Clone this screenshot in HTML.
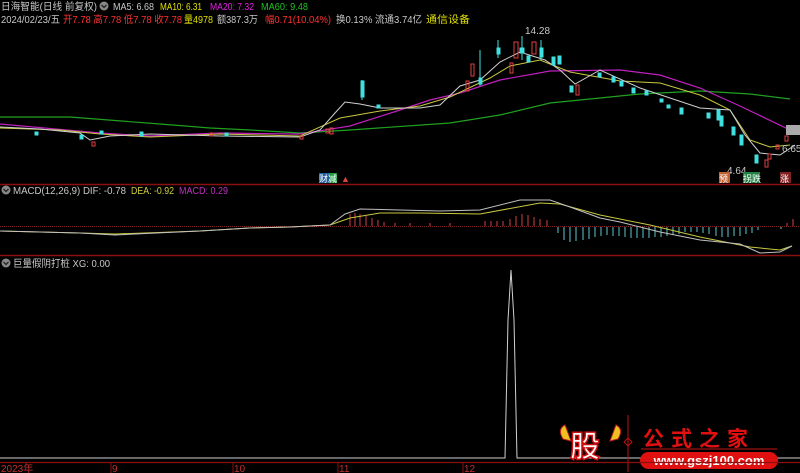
<!DOCTYPE html>
<html><head><meta charset="utf-8"><style>
body{margin:0;background:#000;width:800px;height:473px;overflow:hidden;font-family:"Liberation Sans","Noto Sans CJK SC",sans-serif;}
svg{position:absolute;left:0;top:0}
</style></head><body>
<svg width="800" height="473" viewBox="0 0 800 473" xmlns="http://www.w3.org/2000/svg" font-family="Liberation Sans, Noto Sans CJK SC, sans-serif">
<g font-size="10" lengthAdjust="spacingAndGlyphs">
<text x="1" y="10" fill="#c8c8c8" textLength="96" lengthAdjust="spacingAndGlyphs">日海智能(日线 前复权)</text>
<circle cx="104" cy="6" r="4.5" fill="#888"/><path d="M101.5 5 L104 7.5 L106.5 5" stroke="#222" stroke-width="1.3" fill="none"/>
<text x="113" y="10" fill="#c8c8c8" textLength="41" lengthAdjust="spacingAndGlyphs">MA5: 6.68</text>
<text x="160" y="10" fill="#e0e000" textLength="42" lengthAdjust="spacingAndGlyphs">MA10: 6.31</text>
<text x="210" y="10" fill="#e020e0" textLength="44" lengthAdjust="spacingAndGlyphs">MA20: 7.32</text>
<text x="261" y="10" fill="#20c020" textLength="47" lengthAdjust="spacingAndGlyphs">MA60: 9.48</text>
<text x="1" y="23" fill="#c8c8c8" textLength="59" lengthAdjust="spacingAndGlyphs">2024/02/23/五</text>
<text x="63" y="23" fill="#ff3030" textLength="119" lengthAdjust="spacingAndGlyphs">开7.78 高7.78 低7.78 收7.78</text>
<text x="184" y="23" fill="#e0e000" textLength="29" lengthAdjust="spacingAndGlyphs">量4978</text>
<text x="217" y="23" fill="#c8c8c8" textLength="41" lengthAdjust="spacingAndGlyphs">额387.3万</text>
<text x="265" y="23" fill="#ff3030" textLength="66" lengthAdjust="spacingAndGlyphs">幅0.71(10.04%)</text>
<text x="336" y="23" fill="#c8c8c8" textLength="86" lengthAdjust="spacingAndGlyphs">换0.13% 流通3.74亿</text>
<text x="426" y="23" fill="#e0e000" textLength="44" lengthAdjust="spacingAndGlyphs">通信设备</text>
</g>

<polyline fill="none" stroke="#20a020" stroke-width="1.2" points="0,117 70,117 160,124 210,128 250,130 300,133 350,130 450,123 500,115 550,103 640,94 700,91 750,94 790,99"/>
<polyline fill="none" stroke="#c020c0" stroke-width="1.2" points="0,124 100,133 150,136 220,133 290,134 300,134 350,126 400,110 430,100 460,93 500,80 550,71 620,70 660,75 700,88 740,106 790,130"/>
<polyline fill="none" stroke="#c8c840" stroke-width="1" points="0,128 60,130 100,134 150,137 220,134 300,136 340,118 380,111 420,106 450,97 490,78 510,66 540,60 570,72 620,81 660,83 700,95 730,110 750,140 770,147 790,145"/>
<polyline fill="none" stroke="#d0d0d0" stroke-width="1" points="0,127 40,129 80,133 90,140 110,136 150,134 220,136 300,137 320,130 335,113 345,102 360,104 380,108 420,108 440,105 460,86 480,80 500,62 520,52 545,60 560,70 575,84 600,70 640,88 700,108 730,110 745,135 760,153 780,155 795,145"/>

<g stroke="#40e0e0" fill="#40e0e0">
<rect x="361" y="81" width="3" height="16"/><line x1="362" y1="80" x2="362" y2="100"/>
<rect x="479" y="78" width="3" height="6"/><line x1="480" y1="50" x2="480" y2="86"/>
<rect x="497" y="48" width="3" height="6"/><line x1="498" y1="40" x2="498" y2="58"/>
<rect x="520" y="48" width="4" height="5"/><line x1="522" y1="36" x2="522" y2="60"/>
<rect x="527" y="56" width="3" height="6"/>
<rect x="540" y="48" width="3" height="9"/><line x1="541" y1="40" x2="541" y2="60"/>
<rect x="552" y="57" width="3" height="8"/>
<rect x="558" y="56" width="3" height="8"/>
<rect x="570" y="86" width="3" height="6"/>
<rect x="598" y="73" width="3" height="4"/>
<rect x="612" y="77" width="3" height="5"/>
<rect x="620" y="81" width="3" height="5"/>
<rect x="632" y="88" width="3" height="5"/>
<rect x="645" y="91" width="3" height="4"/>
<rect x="660" y="99" width="3" height="3"/>
<rect x="667" y="105" width="3" height="3"/>
<rect x="680" y="108" width="3" height="6"/>
<rect x="707" y="113" width="3" height="5"/>
<rect x="717" y="110" width="3" height="10"/>
<rect x="720" y="116" width="3" height="10"/>
<rect x="732" y="127" width="3" height="8"/>
<rect x="740" y="135" width="3" height="10"/>
<rect x="755" y="155" width="3" height="8"/>
<rect x="140" y="132" width="3" height="4"/><rect x="80" y="135" width="3" height="4"/><rect x="100" y="131" width="3" height="3"/>
<rect x="35" y="132" width="3" height="3"/><rect x="225" y="133" width="3" height="3"/><rect x="377" y="105" width="3" height="3"/>
</g>
<g stroke="#e04040" fill="none">
<rect x="466" y="81" width="3" height="10"/>
<rect x="471" y="64" width="3" height="12"/>
<rect x="514" y="42" width="4" height="16"/>
<rect x="532" y="42" width="4" height="12"/>
<rect x="510" y="63" width="3" height="10"/>
<rect x="576" y="85" width="3" height="10"/>
<rect x="765" y="160" width="3" height="7"/>
<rect x="768" y="154" width="3" height="5"/>
<rect x="776" y="145" width="3" height="4"/>
<rect x="785" y="136" width="3" height="5"/>
<rect x="330" y="128" width="3" height="6"/><rect x="326" y="129" width="3" height="4"/>
<rect x="92" y="142" width="3" height="4"/><rect x="210" y="133" width="3" height="3"/><rect x="300" y="136" width="3" height="3"/>
</g>
<rect x="786" y="125" width="14" height="10" fill="#aaa"/>
<text x="525" y="34" font-size="10" fill="#c8c8c8">14.28</text>
<text x="727" y="174" font-size="10" fill="#c8c8c8">4.64</text>
<text x="782" y="152" font-size="10" fill="#c8c8c8">6.65</text>
<rect x="319" y="173" width="10" height="10" fill="#2060a0"/><rect x="329" y="173" width="8" height="10" fill="#20a040"/>
<text x="319" y="182" font-size="9" fill="#fff">财减</text>
<text x="341" y="182" font-size="9" fill="#e04040">▲</text>
<rect x="719" y="172" width="11" height="11" fill="#c06030"/><text x="719" y="182" font-size="9" fill="#fff">预</text>
<rect x="743" y="172" width="17" height="11" fill="#208040"/><text x="743" y="182" font-size="9" fill="#fff">拐跌</text>
<rect x="780" y="172" width="11" height="11" fill="#802020"/><text x="780" y="182" font-size="9" fill="#fff">涨</text>

<line x1="0" y1="184.5" x2="800" y2="184.5" stroke="#8a1010" stroke-width="1.5"/>
<circle cx="6" cy="190" r="4.5" fill="#888"/><path d="M3.5 189 L6 191.5 L8.5 189" stroke="#222" stroke-width="1.3" fill="none"/>
<text x="13" y="194" font-size="10" fill="#c8c8c8" textLength="113" lengthAdjust="spacingAndGlyphs">MACD(12,26,9) DIF: -0.78</text>
<text x="131" y="194" font-size="10" fill="#d0d040" textLength="43" lengthAdjust="spacingAndGlyphs">DEA: -0.92</text>
<text x="179" y="194" font-size="10" fill="#c030c0" textLength="49" lengthAdjust="spacingAndGlyphs">MACD: 0.29</text>
<line x1="0" y1="226.5" x2="800" y2="226.5" stroke="#802020" stroke-dasharray="1,1"/>
<g stroke="#d04040">
<line x1="350" y1="226" x2="350" y2="214"/><line x1="355" y1="226" x2="355" y2="213"/><line x1="360" y1="226" x2="360" y2="214"/><line x1="366" y1="226" x2="366" y2="216"/><line x1="372" y1="226" x2="372" y2="218"/><line x1="378" y1="226" x2="378" y2="220"/><line x1="384" y1="226" x2="384" y2="222"/><line x1="395" y1="226" x2="395" y2="223"/><line x1="410" y1="226" x2="410" y2="223"/><line x1="430" y1="226" x2="430" y2="223"/><line x1="450" y1="226" x2="450" y2="223"/>
<line x1="485" y1="226" x2="485" y2="221"/><line x1="491" y1="226" x2="491" y2="221"/><line x1="497" y1="226" x2="497" y2="221"/><line x1="503" y1="226" x2="503" y2="221"/><line x1="510" y1="226" x2="510" y2="219"/><line x1="516" y1="226" x2="516" y2="216"/><line x1="522" y1="226" x2="522" y2="214"/><line x1="528" y1="226" x2="528" y2="215"/><line x1="534" y1="226" x2="534" y2="217"/><line x1="540" y1="226" x2="540" y2="219"/><line x1="547" y1="226" x2="547" y2="220"/><line x1="793" y1="226" x2="793" y2="219"/><line x1="787" y1="226" x2="787" y2="223"/>
</g>
<g stroke="#60c8d0">
<line x1="558" y1="227" x2="558" y2="233"/><line x1="564" y1="227" x2="564" y2="240"/><line x1="570" y1="227" x2="570" y2="242"/><line x1="576" y1="227" x2="576" y2="241"/><line x1="583" y1="227" x2="583" y2="240"/><line x1="589" y1="227" x2="589" y2="239"/><line x1="595" y1="227" x2="595" y2="237"/><line x1="601" y1="227" x2="601" y2="236"/><line x1="607" y1="227" x2="607" y2="235"/><line x1="613" y1="227" x2="613" y2="236"/><line x1="619" y1="227" x2="619" y2="236"/><line x1="625" y1="227" x2="625" y2="237"/><line x1="631" y1="227" x2="631" y2="238"/><line x1="637" y1="227" x2="637" y2="238"/><line x1="643" y1="227" x2="643" y2="238"/><line x1="649" y1="227" x2="649" y2="238"/><line x1="655" y1="227" x2="655" y2="237"/><line x1="661" y1="227" x2="661" y2="237"/><line x1="667" y1="227" x2="667" y2="236"/><line x1="673" y1="227" x2="673" y2="235"/><line x1="679" y1="227" x2="679" y2="234"/><line x1="685" y1="227" x2="685" y2="232"/><line x1="691" y1="227" x2="691" y2="232"/><line x1="697" y1="227" x2="697" y2="232"/><line x1="703" y1="227" x2="703" y2="233"/><line x1="709" y1="227" x2="709" y2="234"/><line x1="716" y1="227" x2="716" y2="236"/><line x1="722" y1="227" x2="722" y2="237"/><line x1="728" y1="227" x2="728" y2="237"/><line x1="734" y1="227" x2="734" y2="236"/><line x1="740" y1="227" x2="740" y2="236"/><line x1="746" y1="227" x2="746" y2="234"/><line x1="752" y1="227" x2="752" y2="233"/><line x1="758" y1="227" x2="758" y2="230"/><line x1="781" y1="227" x2="781" y2="229"/>
</g>
<polyline fill="none" stroke="#c8c840" stroke-width="1" points="0,231 80,233 115,234 200,231 250,228 290,227 330,225 350,218 380,213 420,213 480,214 540,203 560,204 600,215 650,225 700,237 750,247 780,250 792,246"/>
<polyline fill="none" stroke="#c0c0c0" stroke-width="1" points="0,231 80,233 115,235 200,231 250,228 290,227 330,225 345,214 360,209 400,210 440,211 480,210 520,200 550,200 570,207 600,218 620,222 660,232 700,240 740,244 760,253 780,252 792,246"/>

<line x1="0" y1="255.5" x2="800" y2="255.5" stroke="#8a1010" stroke-width="1.5"/>
<circle cx="6" cy="263" r="4.5" fill="#888"/><path d="M3.5 262 L6 264.5 L8.5 262" stroke="#222" stroke-width="1.3" fill="none"/>
<text x="13" y="267" font-size="10" fill="#c8c8c8" textLength="97" lengthAdjust="spacingAndGlyphs">巨量假阴打桩 XG: 0.00</text>
<polyline fill="none" stroke="#d0d0d0" stroke-width="1" points="0,458 505,458 508,320 511,270 514,320 517,458 800,458"/>

<path d="M565 425 q-8 4 -2 14 l8 2z" fill="#f0c020" stroke="#c02020"/>
<path d="M616 425 q8 4 2 14 l-8 2z" fill="#f0c020" stroke="#c02020"/>
<text x="570" y="457" font-size="30" font-weight="bold" fill="#fff" stroke="#d01010" stroke-width="1.5">股</text>
<line x1="628" y1="415" x2="628" y2="472" stroke="#c01010"/>
<path d="M628 438 l4 4 -4 4 -4 -4z" fill="none" stroke="#c01010"/>
<text x="643" y="446" font-size="21" font-weight="bold" fill="#e01010" letter-spacing="7">公式之家</text>
<line x1="641" y1="449" x2="777" y2="449" stroke="#801010" stroke-width="1.5"/>
<rect x="640" y="452" width="138" height="17" rx="8.5" fill="#e01010"/>
<text x="709" y="465" font-size="13" font-weight="bold" fill="#fff" text-anchor="middle">www.gszj100.com</text>

<line x1="0" y1="462.5" x2="800" y2="462.5" stroke="#8a1010" stroke-width="1.2"/>
<g stroke="#8a1010"><line x1="111" y1="462" x2="111" y2="473"/><line x1="233" y1="462" x2="233" y2="473"/><line x1="338" y1="462" x2="338" y2="473"/><line x1="463" y1="462" x2="463" y2="473"/></g>
<g font-size="10" fill="#c03030"><text x="1" y="472">2023年</text><text x="112" y="472">9</text><text x="234" y="472">10</text><text x="339" y="472">11</text><text x="464" y="472">12</text></g>
</svg>
</body></html>
